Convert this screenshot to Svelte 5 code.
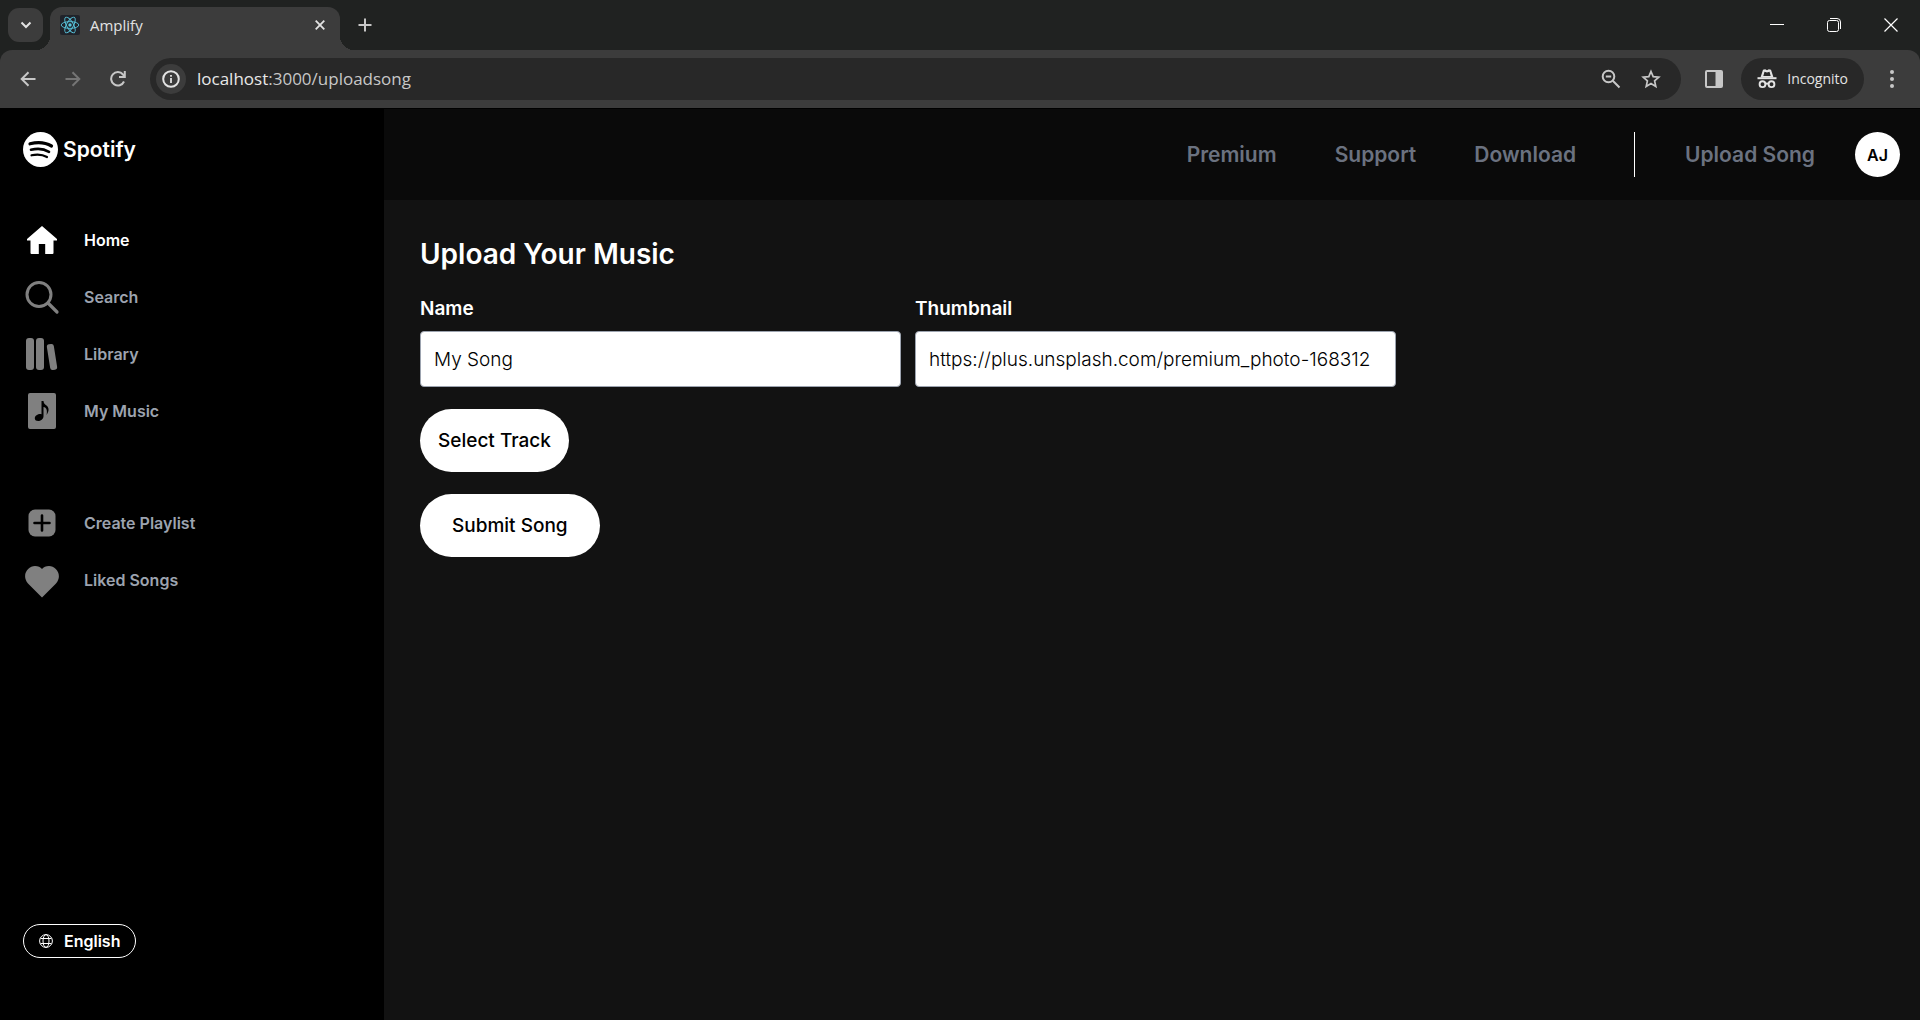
<script>
  let songName = $state('My Song');
  let thumbnail = $state('https://plus.unsplash.com/premium_photo-168312');

  const primary = [
    { label: 'Home', icon: 'home', active: true },
    { label: 'Search', icon: 'search' },
    { label: 'Library', icon: 'library' },
    { label: 'My Music', icon: 'music' }
  ];
  const secondary = [
    { label: 'Create Playlist', icon: 'plus' },
    { label: 'Liked Songs', icon: 'heart' }
  ];
  const links = ['Premium', 'Support', 'Download'];
</script>

{#snippet navItem(item)}
  <li>
    <a href="#{item.icon}" class="item" class:active={item.active}>
      <svg class="item-icon" viewBox="0 0 36 36" aria-hidden="true">
        {#if item.icon === 'home'}
          <path fill="currentColor" d="M18 4 33 17v1.500h-3.500V31a1 1 0 0 1-1 1h-7.300V22h-6.400v10H7.500a1 1 0 0 1-1-1V18.500H3V17z" />
        {:else if item.icon === 'search'}
          <circle cx="15" cy="15.500" r="12" fill="none" stroke="currentColor" stroke-width="3" />
          <path d="M24 24l9 9" stroke="currentColor" stroke-width="3.200" stroke-linecap="round" />
        {:else if item.icon === 'library'}
          <rect x="2" y="2" width="8" height="32" rx="3" fill="currentColor" />
          <rect x="12" y="2" width="8" height="32" rx="3" fill="currentColor" />
          <rect x="24.500" y="8" width="7" height="26" rx="2.500" fill="currentColor" transform="rotate(-9 28 21)" />
        {:else if item.icon === 'music'}
          <path fill="currentColor" fill-rule="evenodd" d="M6 0h24a2 2 0 0 1 2 2v32a2 2 0 0 1-2 2H6a2 2 0 0 1-2-2V2a2 2 0 0 1 2-2zm11.500 8v13.300c-2.500-.8-6.700 1-6.700 4.200 0 4 8.700 3.200 8.700-2.200V14c3 .3 4 3.500 3 8 3-4 2.500-7.500 0-9.500-2-1.500-3-2.500-3-4.500z" />
        {:else if item.icon === 'plus'}
          <rect x="4.500" y="4.500" width="27" height="27" rx="6.500" fill="currentColor" />
          <path d="M18 10.500v15M10.500 18h15" stroke="#000" stroke-width="2.600" stroke-linecap="round" />
        {:else}
          <path fill="currentColor" d="M18 35.500 4 21.500C-3 13 4 4 11 4c3 0 5.500 1 7 3C19.500 5 22 4 25 4c7 0 14 9 7 17.500z" />
        {/if}
      </svg>
      <span>{item.label}</span>
    </a>
  </li>
{/snippet}

<div class="window">
  <header class="tabstrip">
    <button class="tab-search" aria-label="Search tabs">
      <svg width="12" height="8" viewBox="0 0 12 8"><path d="M1.500 1.500 6 6l4.500-4.500" fill="none" stroke="currentColor" stroke-width="2" /></svg>
    </button>
    <div class="tab">
      <svg class="favicon" width="20" height="20" viewBox="0 0 20 20" aria-hidden="true">
        <rect width="20" height="20" rx="2" fill="#20232a" />
        <g fill="none" stroke="#58c4dc" stroke-width="0.900">
          <ellipse cx="10" cy="10" rx="8.800" ry="3.400" />
          <ellipse cx="10" cy="10" rx="8.800" ry="3.400" transform="rotate(60 10 10)" />
          <ellipse cx="10" cy="10" rx="8.800" ry="3.400" transform="rotate(120 10 10)" />
        </g>
        <circle cx="10" cy="10" r="1.700" fill="#58c4dc" />
      </svg>
      <span class="tab-title">Amplify</span>
      <button class="bare" aria-label="Close tab">
        <svg width="10" height="10" viewBox="0 0 10 10"><path d="M.7.7l8.600 8.600M9.300.7.7 9.300" stroke="currentColor" stroke-width="1.800" /></svg>
      </button>
    </div>
    <button class="bare new-tab" aria-label="New tab">
      <svg width="14" height="14" viewBox="0 0 14 14"><path d="M7 .5v13M.5 7h13" stroke="currentColor" stroke-width="2" /></svg>
    </button>
    <div class="win-buttons">
      <button class="bare" aria-label="Minimize">
        <svg width="14" height="14" viewBox="0 0 14 14"><path d="M0 6.500h14" stroke="currentColor" /></svg>
      </button>
      <button class="bare" aria-label="Restore">
        <svg width="14" height="14" viewBox="0 0 14 14" fill="none" stroke="currentColor"><rect x=".5" y="2.500" width="11" height="11" rx="2" /><path d="M3 .5h7a3.500 3.500 0 0 1 3.500 3.500v7" /></svg>
      </button>
      <button class="bare" aria-label="Close window">
        <svg width="14" height="14" viewBox="0 0 14 14"><path d="M.5.5l13 13M13.500.5l-13 13" stroke="currentColor" stroke-width="1.200" /></svg>
      </button>
    </div>
  </header>

  <div class="toolbar">
    <div class="history">
      <button class="bare" aria-label="Back">
        <svg width="16" height="16" viewBox="0 0 16 16" fill="none" stroke="currentColor" stroke-width="2"><path d="M15.500 8H2M8.500 1.200 1.700 8l6.800 6.800" /></svg>
      </button>
      <button class="bare" aria-label="Forward" disabled>
        <svg width="16" height="16" viewBox="0 0 16 16" fill="none" stroke="currentColor" stroke-width="2"><path d="M.5 8H14M7.500 1.200 14.300 8l-6.800 6.800" /></svg>
      </button>
      <button class="bare" aria-label="Reload">
        <svg width="16" height="16" viewBox="0 0 16 16"><path d="M14 10.500A6.700 6.700 0 1 1 13 3.500L14 5" fill="none" stroke="currentColor" stroke-width="2" /><path d="M15.800 0v7H9V5h4.800V0z" fill="currentColor" /></svg>
      </button>
    </div>
    <div class="omnibox">
      <button class="bare info" aria-label="Site information">
        <svg width="18" height="18" viewBox="0 0 18 18"><circle cx="9" cy="9" r="7.800" fill="none" stroke="currentColor" stroke-width="2" /><path d="M9 8v5M9 5v1.800" stroke="currentColor" stroke-width="1.800" /></svg>
      </button>
      <span class="url"><b>localhost</b>:3000/uploadsong</span>
      <button class="bare" aria-label="Zoom">
        <svg width="20" height="20" viewBox="0 0 20 20" fill="none" stroke="currentColor" stroke-width="2"><circle cx="7.500" cy="7.500" r="5.800" /><path d="M11.800 11.800l6.700 6.700M4.800 7.500h5.400" /></svg>
      </button>
      <button class="bare" aria-label="Bookmark this page">
        <svg width="20" height="20" viewBox="0 0 20 20"><path d="M10 2.500l2.200 5.200 5.600.5-4.200 3.700 1.200 5.500L10 14.500l-4.800 2.900 1.200-5.500-4.200-3.700 5.600-.5z" fill="none" stroke="currentColor" stroke-width="1.700" /></svg>
      </button>
    </div>
    <button class="bare panel" aria-label="Side panel">
      <svg width="20" height="20" viewBox="0 0 20 20"><rect x="2" y="2" width="16" height="16" rx="1" fill="none" stroke="currentColor" stroke-width="2" /><path d="M11.500 2H18v16h-6.500z" fill="currentColor" /></svg>
    </button>
    <button class="incognito">
      <svg width="20" height="20" viewBox="0 0 20 20" aria-hidden="true"><path fill="currentColor" fill-rule="evenodd" d="M3.500 8.500 6 .8 8.200.2 10 1.200 11.800.2 14 .8l2.500 7.700zM6.300 7h7.400l-1.200-4.300L10 3.500l-2.500-.8z" /><path d="M.5 9.200h19" stroke="currentColor" stroke-width="2" /><g fill="none" stroke="currentColor" stroke-width="1.900"><circle cx="5.500" cy="15.200" r="2.900" /><circle cx="14.500" cy="15.200" r="2.900" /><path d="M8.300 15q1.700-1 3.400 0" /></g></svg>
      Incognito
    </button>
    <button class="bare menu" aria-label="Menu">
      <svg width="4" height="18" viewBox="0 0 4 18" fill="currentColor"><circle cx="2" cy="2" r="2" /><circle cx="2" cy="9" r="2" /><circle cx="2" cy="16" r="2" /></svg>
    </button>
  </div>

  <div class="app">
    <aside>
      <a class="logo" href="#home">
        <svg width="35" height="35" viewBox="0 0 35 35" aria-hidden="true">
          <circle cx="17.500" cy="17.500" r="17.500" fill="#fff" />
          <g fill="none" stroke="#000" stroke-linecap="round">
            <path d="M7 11.800q12.500-3 21.500 2.200" stroke-width="3.200" />
            <path d="M8 17.800q10.500-2.500 18 2" stroke-width="2.600" />
            <path d="M8.500 23.300q9-2 15.500 1.700" stroke-width="2.200" />
          </g>
        </svg>
        Spotify
      </a>
      <nav aria-label="Main">
        <ul>{#each primary as item}{@render navItem(item)}{/each}</ul>
        <ul>{#each secondary as item}{@render navItem(item)}{/each}</ul>
      </nav>
      <button class="language">
        <svg width="14" height="14" viewBox="0 0 14 14" fill="none" stroke="currentColor" stroke-width="1" aria-hidden="true"><circle cx="7" cy="7" r="6.400" /><ellipse cx="7" cy="7" rx="3" ry="6.400" /><path d="M1.500 4.500h11M1.500 9.500h11" /></svg>
        English
      </button>
    </aside>

    <div class="content">
      <nav class="topbar" aria-label="Account">
        {#each links as link}<a href="#{link.toLowerCase()}">{link}</a>{/each}
        <span class="divider"></span>
        <a class="upload" href="#uploadsong">Upload Song</a>
        <button class="avatar">AJ</button>
      </nav>

      <main>
        <h1>Upload Your Music</h1>
        <form onsubmit={(e) => e.preventDefault()}>
          <div class="fields">
            <div class="field">
              <label for="name">Name</label>
              <input id="name" type="text" bind:value={songName} />
            </div>
            <div class="field">
              <label for="thumbnail">Thumbnail</label>
              <input id="thumbnail" type="text" bind:value={thumbnail} />
            </div>
          </div>
          <button class="pill" type="button">Select Track</button>
          <button class="pill wide" type="submit">Submit Song</button>
        </form>
      </main>
    </div>
  </div>
</div>

<style>
  :global(body) { margin: 0; background: #000; }
  .window, .window * { box-sizing: border-box; }
  .window {
    min-height: 100vh;
    display: flex;
    flex-direction: column;
    background: #202221;
    color: #e3e3e3;
    font-family: Inter, "Liberation Sans", sans-serif;
  }
  button { font: inherit; color: inherit; border: 0; cursor: pointer; }
  a { color: inherit; text-decoration: none; }
  svg { display: block; flex: none; }
  .bare { background: none; padding: 0; display: flex; align-items: center; justify-content: center; }

  .tabstrip { height: 50px; display: flex; padding: 0 1px 0 8px; }
  .tab-search {
    width: 35px; height: 34px; margin: 8px 7px 0 0; padding: 0;
    display: flex; align-items: center; justify-content: center;
    background: #3c3c3c; border-radius: 11px;
  }
  .tab {
    position: relative;
    width: 290px; margin-top: 7px; padding: 0 15px 15px 10px;
    display: flex; align-items: flex-end; gap: 10px;
    background: #3c3c3c; border-radius: 12px 12px 0 0;
    font: 15px/20px "Open Sans", "Noto Sans", sans-serif;
  }
  .tab::before, .tab::after {
    content: ""; position: absolute; bottom: 0; width: 14px; height: 14px;
  }
  .tab::before { right: 100%; background: radial-gradient(circle at 0 0, transparent 14px, #3c3c3c 14px); }
  .tab::after { left: 100%; background: radial-gradient(circle at 100% 0, transparent 14px, #3c3c3c 14px); }
  .tab-title { flex: 1; }
  .tab .bare { height: 20px; }
  .new-tab { width: 50px; color: #c7c7c7; }
  .win-buttons { margin-left: auto; display: flex; color: #fff; }
  .win-buttons .bare { width: 57px; }

  .toolbar {
    height: 59px; padding: 0 26px 0 16px;
    display: flex; align-items: center;
    background: #3c3c3c; border-bottom: 1px solid #000;
    border-radius: 12px 12px 0 0; color: #c7c7c7;
  }
  .history { display: flex; gap: 21px; margin-right: 20px; }
  .history .bare { width: 24px; height: 24px; }
  .history .bare:disabled { color: #757575; }
  .omnibox {
    flex: 1; height: 42px; padding: 0 20px 0 6px; margin-right: 23px;
    display: flex; align-items: center; gap: 20px;
    background: #282828; border-radius: 21px;
  }
  .info { width: 30px; height: 30px; border-radius: 50%; background: #3c3c3c; color: #e3e3e3; }
  .url { flex: 1; margin-left: -9px; font: 17px/24px "Open Sans", "Noto Sans", sans-serif; color: #c7c7c7; }
  .url b { font-weight: 400; color: #e8e8e8; }
  .incognito {
    height: 42px; margin: 0 26px 0 17px; padding: 0 16px;
    display: flex; align-items: center; gap: 10px;
    background: #282828; border-radius: 21px; color: #e3e3e3;
    font: 14px/20px "Open Sans", "Noto Sans", sans-serif;
  }

  .app { flex: 1; display: flex; background: #121212; }
  aside {
    width: 20%; padding: 23px 23px 62px;
    display: flex; flex-direction: column; align-items: flex-start;
    background: #000;
  }
  .logo { display: flex; align-items: center; gap: 5px; color: #fff; font-size: 21px; font-weight: 600; line-height: 35px; }
  aside nav { margin-top: 44px; }
  ul { list-style: none; margin: 0; padding: 0; }
  ul + ul { margin-top: 55px; }
  .item { height: 57px; padding-left: 1px; display: flex; align-items: center; gap: 24px; color: #9ca3af; font-size: 16px; font-weight: 600; }
  .item-icon { width: 36px; height: 36px; color: #808080; }
  .item.active, .active .item-icon { color: #fff; }
  .language {
    height: 34px; margin-top: auto; padding: 0 15px;
    display: flex; align-items: center; gap: 11px;
    background: none; border: 1px solid #fff; border-radius: 17px;
    color: #fff; font-size: 16px; font-weight: 600;
  }

  .content { flex: 1; min-width: 0; }
  .topbar {
    height: 91px; padding-right: 20px;
    display: flex; align-items: center; justify-content: flex-end; gap: 58px;
    background: #0a0a0a; color: #6b7280; font-size: 21px; font-weight: 600;
  }
  .divider { width: 1px; height: 45px; background: #fff; }
  .upload { margin: 0 -18px 0 -8px; }
  .avatar { width: 45px; height: 45px; padding: 0; border-radius: 50%; background: #fff; color: #000; font-size: 16px; font-weight: 600; }

  main { padding: 33px 36px; color: #fff; }
  h1 { margin: 0 0 20px; font-size: 28px; line-height: 42px; font-weight: 600; }
  form { display: flex; flex-direction: column; align-items: flex-start; gap: 22px; }
  .fields { display: flex; gap: 14px; width: calc(100% * 2 / 3); }
  .field { flex: 1; min-width: 0; display: flex; flex-direction: column; gap: 8px; }
  label { font-size: 19px; line-height: 28px; font-weight: 600; }
  input {
    width: 100%; height: 56px; padding: 0 13px;
    border: 1px solid #9ca3af; border-radius: 4px; background: #fff;
    color: #000; font: 300 19px/28px Inter, "Liberation Sans", sans-serif;
  }
  .pill { height: 63px; padding: 0 18px; border-radius: 32px; background: #fff; color: #000; font-size: 19px; font-weight: 500; }
  .wide { padding: 0 32px; }
</style>
